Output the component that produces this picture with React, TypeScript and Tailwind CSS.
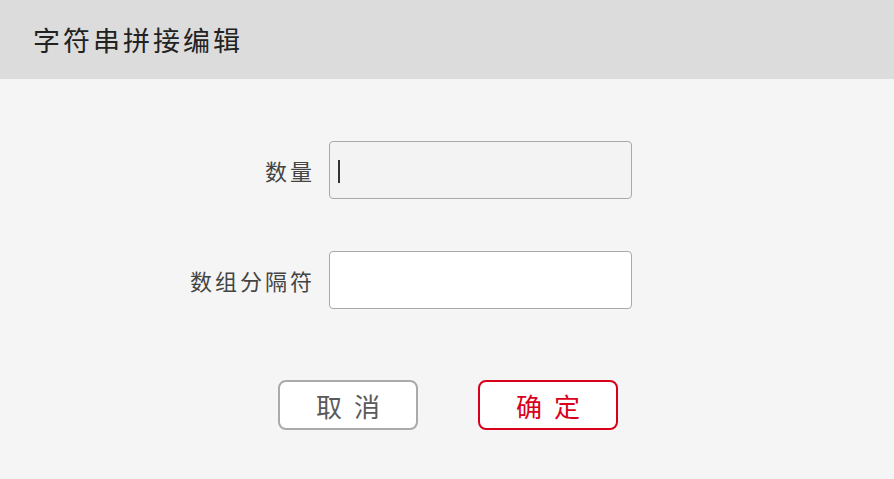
import React from 'react';

const font = { fontFamily: '"Noto Sans CJK SC", "Noto Sans", sans-serif' };

function Field({ label, focused }: { label: string; focused?: boolean }) {
  return (
    <div className="flex items-center">
      <label className="w-[329px] pr-[14px] text-right text-[22px] tracking-[3px] text-[#444444] leading-none">
        {label}
      </label>
      <div
        className={`relative h-[58px] w-[303px] rounded-[4px] border border-[#a9a9a9] ${
          focused ? 'bg-[#f3f3f3]' : 'bg-white'
        }`}
      >
        {focused && <span className="absolute left-[8px] top-[18px] h-[23px] w-[2px] bg-[#333333]" />}
      </div>
    </div>
  );
}

export default function App() {
  return (
    <div className="h-[479px] w-[894px] bg-[#f5f5f5]" style={font}>
      <div className="flex h-[79px] items-center bg-[#dcdcdc] pl-[33px]">
        <h1 className="text-[27px] font-normal tracking-[3px] text-[#222222] leading-none">字符串拼接编辑</h1>
      </div>
      <div className="flex flex-col gap-[52px] pt-[62px]">
        <Field label="数量" focused />
        <Field label="数组分隔符" />
      </div>
      <div className="flex justify-center gap-[60px] pl-[2px] pt-[71px]">
        <button className="h-[50px] w-[140px] rounded-[8px] border-2 border-[#aaaaaa] bg-white pl-[3px] text-[26px] tracking-[3px] text-[#5a5a5a]">
          取 消
        </button>
        <button className="h-[50px] w-[140px] rounded-[8px] border-2 border-[#d9001b] bg-white pl-[3px] text-[26px] tracking-[3px] text-[#d9001b]">
          确 定
        </button>
      </div>
    </div>
  );
}
